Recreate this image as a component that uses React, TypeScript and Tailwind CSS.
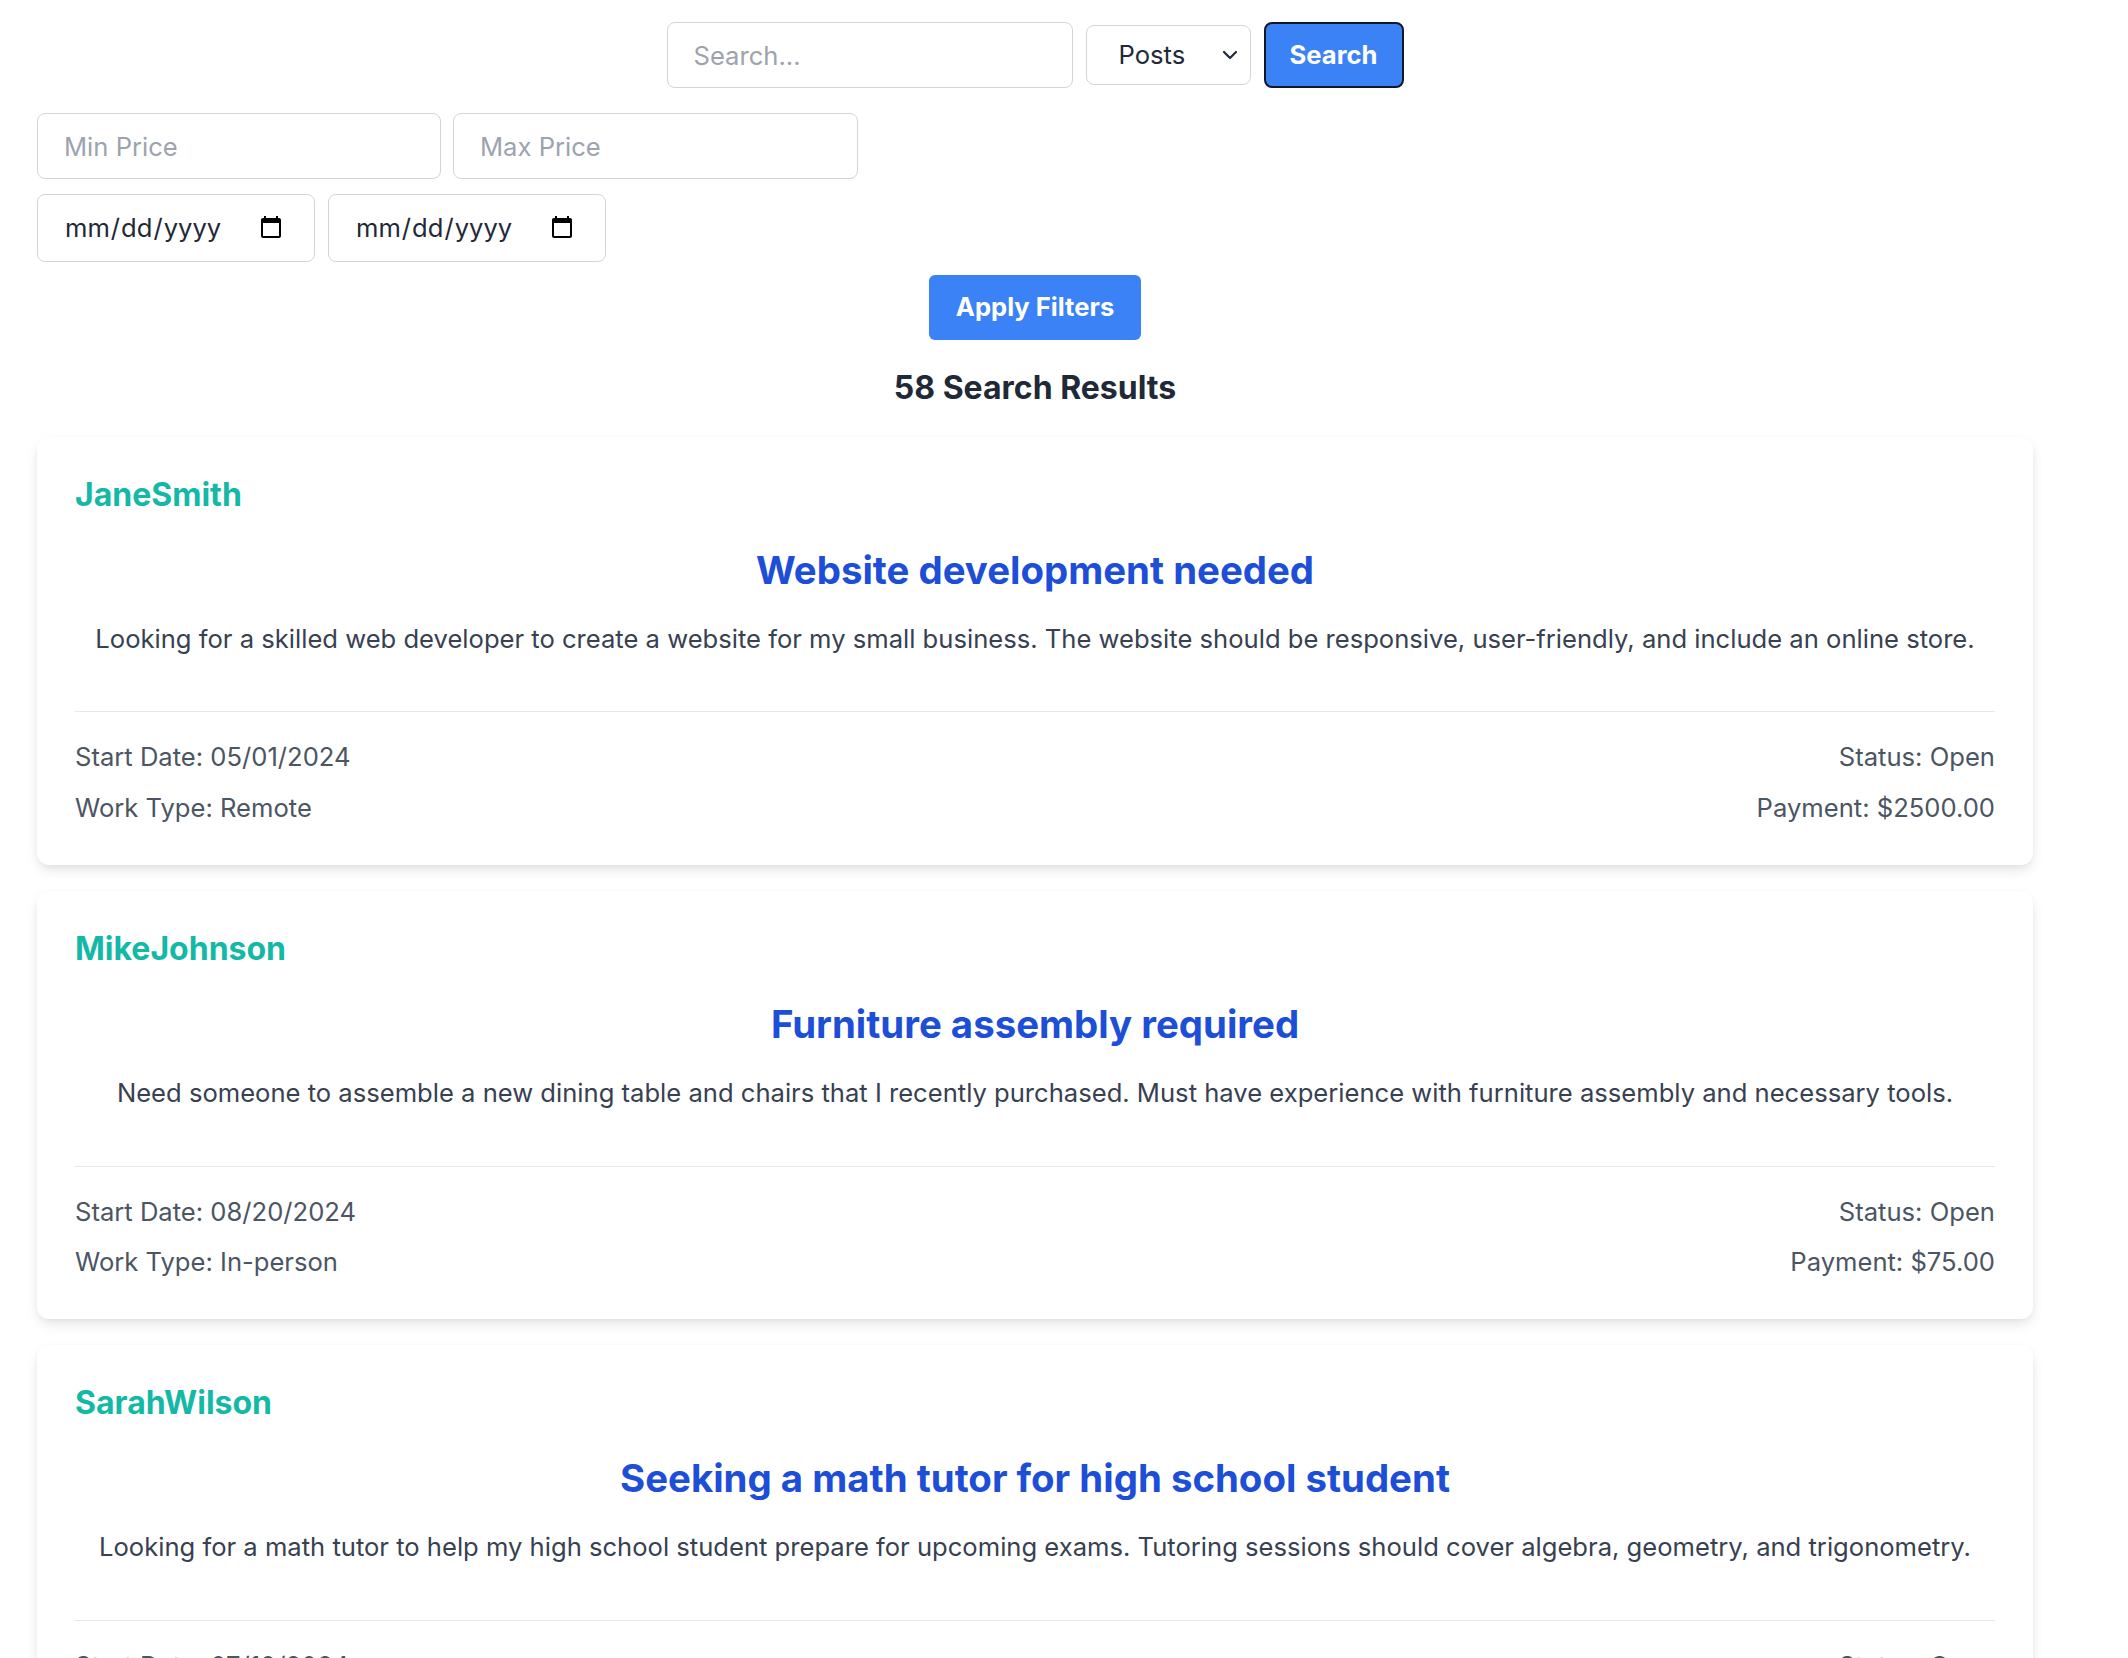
import { ChevronDown } from 'lucide-react'

type Post = {
  user: string
  title: string
  description: string
  startDate: string
  workType: string
  status: string
  payment: string
}

const posts: Post[] = [
  {
    user: 'JaneSmith',
    title: 'Website development needed',
    description:
      'Looking for a skilled web developer to create a website for my small business. The website should be responsive, user-friendly, and include an online store.',
    startDate: '05/01/2024',
    workType: 'Remote',
    status: 'Open',
    payment: '$2500.00',
  },
  {
    user: 'MikeJohnson',
    title: 'Furniture assembly required',
    description:
      'Need someone to assemble a new dining table and chairs that I recently purchased. Must have experience with furniture assembly and necessary tools.',
    startDate: '08/20/2024',
    workType: 'In-person',
    status: 'Open',
    payment: '$75.00',
  },
  {
    user: 'SarahWilson',
    title: 'Seeking a math tutor for high school student',
    description:
      'Looking for a math tutor to help my high school student prepare for upcoming exams. Tutoring sessions should cover algebra, geometry, and trigonometry.',
    startDate: '07/10/2024',
    workType: 'Remote',
    status: 'Open',
    payment: '$40.00',
  },
]

const inputBase =
  'h-[66px] rounded-[8px] border border-[#d1d5db] bg-white px-[26px] text-[25.6px] text-[#1f2937] outline-none placeholder:text-[#9ca3af]'

function PostCard({ post }: { post: Post }) {
  return (
    <div className="rounded-[12px] bg-white px-[38px] pt-[36px] pb-[38px] shadow-[0_6px_14px_-2px_rgba(0,0,0,0.12),0_2px_6px_-2px_rgba(0,0,0,0.06)]">
      <p className="text-[32px] leading-[44.8px] font-bold text-[#14b8a6]">{post.user}</p>
      <h2 className="mt-[27px] text-center text-[38.4px] leading-[51.2px] font-bold text-[#1d4ed8]">
        {post.title}
      </h2>
      <p className="mt-[24px] text-center text-[25.6px] leading-[38.4px] text-[#374151]">{post.description}</p>
      <div className="mt-[53px] flex justify-between border-t border-[#e5e7eb] pt-[26px] text-[25.6px] leading-[38.4px] text-[#4b5563]">
        <div className="flex flex-col gap-[12px]">
          <p>Start Date: {post.startDate}</p>
          <p>Work Type: {post.workType}</p>
        </div>
        <div className="flex flex-col gap-[12px] text-right">
          <p>Status: {post.status}</p>
          <p>Payment: {post.payment}</p>
        </div>
      </div>
    </div>
  )
}

export default function App() {
  return (
    <div className="min-h-screen bg-white font-['Inter',sans-serif]">
      <div className="ml-[37px] w-[1996px] pt-[22px]">
        <div className="flex items-center justify-center gap-[13px]">
          <input className={`${inputBase} w-[406px]`} placeholder="Search..." />
          <div className="relative">
            <select className="h-[60px] w-[165px] appearance-none rounded-[8px] border border-[#d1d5db] bg-white pl-[32px] text-[25.6px] text-[#1f2937] outline-none">
              <option>Posts</option>
              <option>Users</option>
            </select>
            <ChevronDown
              className="pointer-events-none absolute top-1/2 right-[9px] h-[24px] w-[24px] -translate-y-1/2 text-[#1f2937]"
              strokeWidth={2.2}
            />
          </div>
          <button className="h-[66px] w-[140px] rounded-[8px] border-2 border-[#111827] bg-[#3b82f6] text-[25.6px] font-bold text-white">
            Search
          </button>
        </div>

        <div className="mt-[25px] flex gap-[12px]">
          <input className={`${inputBase} w-[404px]`} placeholder="Min Price" />
          <input className={`${inputBase} w-[405px]`} placeholder="Max Price" />
        </div>

        <div className="mt-[15px] flex gap-[13px]">
          <input type="date" className={`${inputBase} h-[68px] w-[278px] pr-[28px] pl-[26px]`} />
          <input type="date" className={`${inputBase} h-[68px] w-[278px] pr-[28px] pl-[26px]`} />
        </div>

        <div className="mt-[13px] flex justify-center">
          <button className="h-[65px] w-[212px] rounded-[6px] bg-[#3b82f6] text-[25.6px] font-bold text-white">
            Apply Filters
          </button>
        </div>

        <h1 className="mt-[25px] text-center text-[32px] leading-[45px] font-bold text-[#1f2937]">58 Search Results</h1>

        <div className="mt-[27px] flex flex-col gap-[26px] pb-[40px]">
          {posts.map((p) => (
            <PostCard key={p.user} post={p} />
          ))}
        </div>
      </div>
    </div>
  )
}
